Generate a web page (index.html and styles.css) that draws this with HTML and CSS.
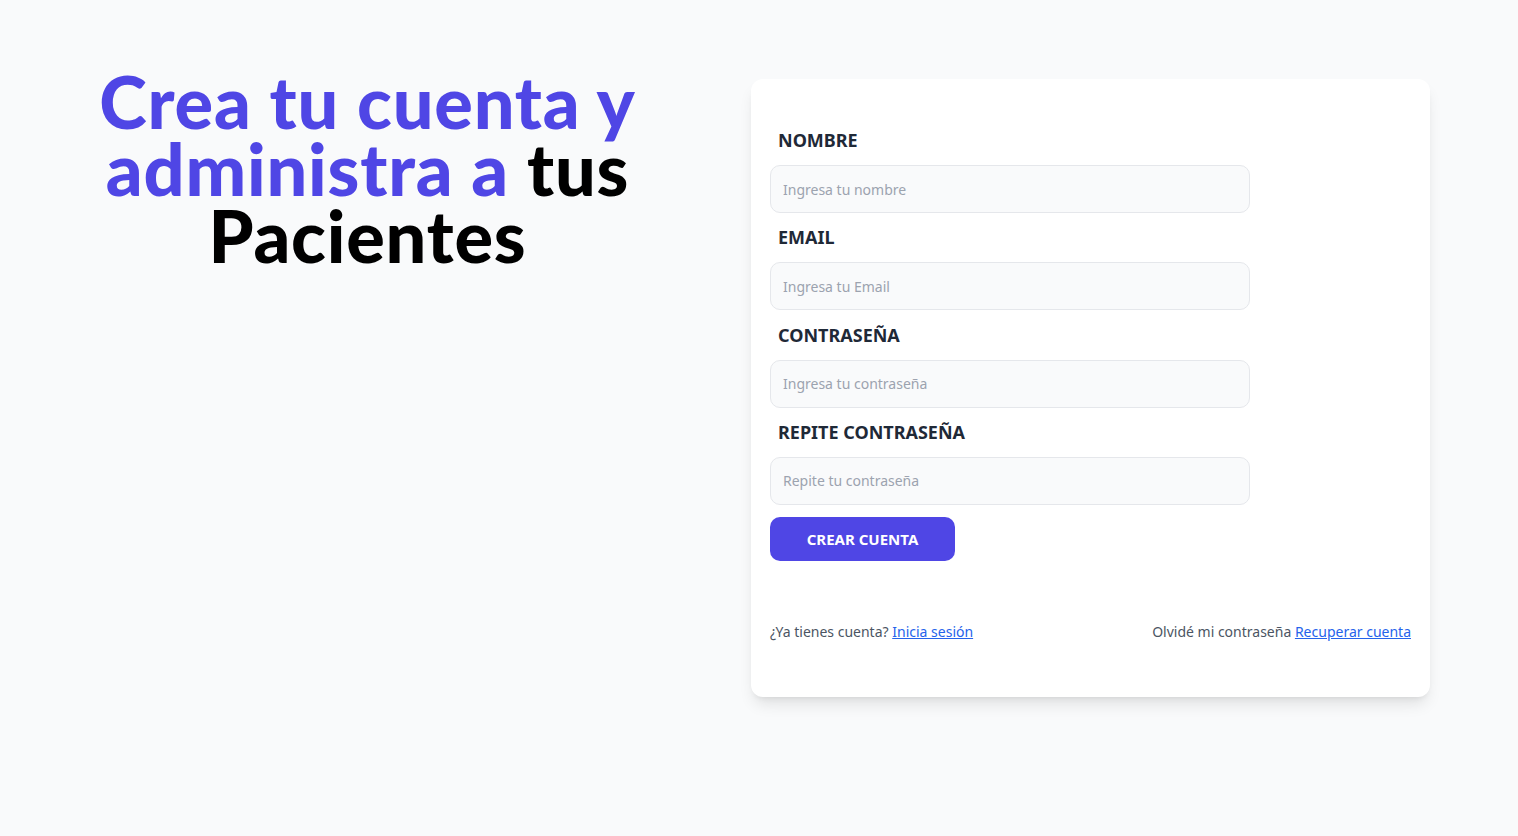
FILE: index.html
```html
<!DOCTYPE html>
<html lang="es">
<head>
<meta charset="utf-8">
<title>Crea tu cuenta</title>
<link rel="stylesheet" href="styles.css">
</head>
<body>
<main class="layout">
  <div class="intro">
    <h1 class="title">Crea tu cuenta y administra a <span class="title-dark">tus Pacientes</span></h1>
  </div>
  <div class="card">
    <form class="form">
      <div class="field">
        <label class="label" for="nombre">Nombre</label>
        <input class="input" id="nombre" type="text" placeholder="Ingresa tu nombre">
      </div>
      <div class="field">
        <label class="label" for="email">Email</label>
        <input class="input" id="email" type="email" placeholder="Ingresa tu Email">
      </div>
      <div class="field">
        <label class="label" for="password">Contraseña</label>
        <input class="input" id="password" type="password" placeholder="Ingresa tu contraseña">
      </div>
      <div class="field">
        <label class="label" for="password2">Repite Contraseña</label>
        <input class="input" id="password2" type="password" placeholder="Repite tu contraseña">
      </div>
      <button class="button" type="button">Crear Cuenta</button>
    </form>
    <nav class="links">
      <p class="link-text">¿Ya tienes cuenta? <a class="link" href="#">Inicia sesión</a></p>
      <p class="link-text">Olvidé mi contraseña <a class="link" href="#">Recuperar cuenta</a></p>
    </nav>
  </div>
</main>
</body>
</html>
```

FILE: styles.css
```css
* { box-sizing: border-box; }

html, body {
  margin: 0;
  padding: 0;
}

body {
  background: #f9fafb;
  font-family: "Noto Sans", "Open Sans", sans-serif;
  color: #1f2937;
  min-height: 836px;
}

.layout {
  display: grid;
  grid-template-columns: 735px 679px;
  column-gap: 16px;
  padding: 68px 88px 0 0;
  align-items: start;
}

.intro {
  display: flex;
  justify-content: center;
}

.title {
  margin: 0;
  width: 590px;
  text-align: center;
  font-family: "Lato", sans-serif;
  font-weight: 900;
  font-size: 72px;
  line-height: 67px;
  letter-spacing: 0.8px;
  color: #4f46e5;
}

.title-dark {
  color: #000;
}

.card {
  margin-top: 11px;
  background: #fff;
  border-radius: 12px;
  box-shadow: 0 10px 15px -3px rgba(0,0,0,0.1), 0 4px 6px -4px rgba(0,0,0,0.1);
  padding: 47px 19px 55px 19px;
}

.form {
  display: flex;
  flex-direction: column;
  gap: 10.3px;
}

.field {
  display: flex;
  flex-direction: column;
}

.label {
  display: block;
  margin: 0 0 11px 8px;
  font-size: 18px;
  line-height: 28px;
  font-weight: 700;
  text-transform: uppercase;
  color: #1f2937;
}

.input {
  width: 480px;
  height: 48px;
  padding: 0 12px;
  border: 1px solid #e5e7eb;
  border-radius: 10px;
  background: #f9fafb;
  font-family: inherit;
  font-size: 14px;
  color: #1f2937;
}

.input::placeholder {
  color: #9ca3af;
}

.button {
  margin-top: 2px;
  width: 185px;
  height: 44px;
  border: 0;
  border-radius: 10px;
  background: #4f46e5;
  color: #fff;
  font-family: inherit;
  font-weight: 700;
  font-size: 15px;
  text-transform: uppercase;
  cursor: pointer;
}

.links {
  margin-top: 61px;
  display: flex;
  justify-content: space-between;
}

.link-text {
  margin: 0;
  font-size: 14px;
  line-height: 20px;
  color: #4b5563;
}

.link {
  color: #2563eb;
  text-decoration: underline;
}
```
